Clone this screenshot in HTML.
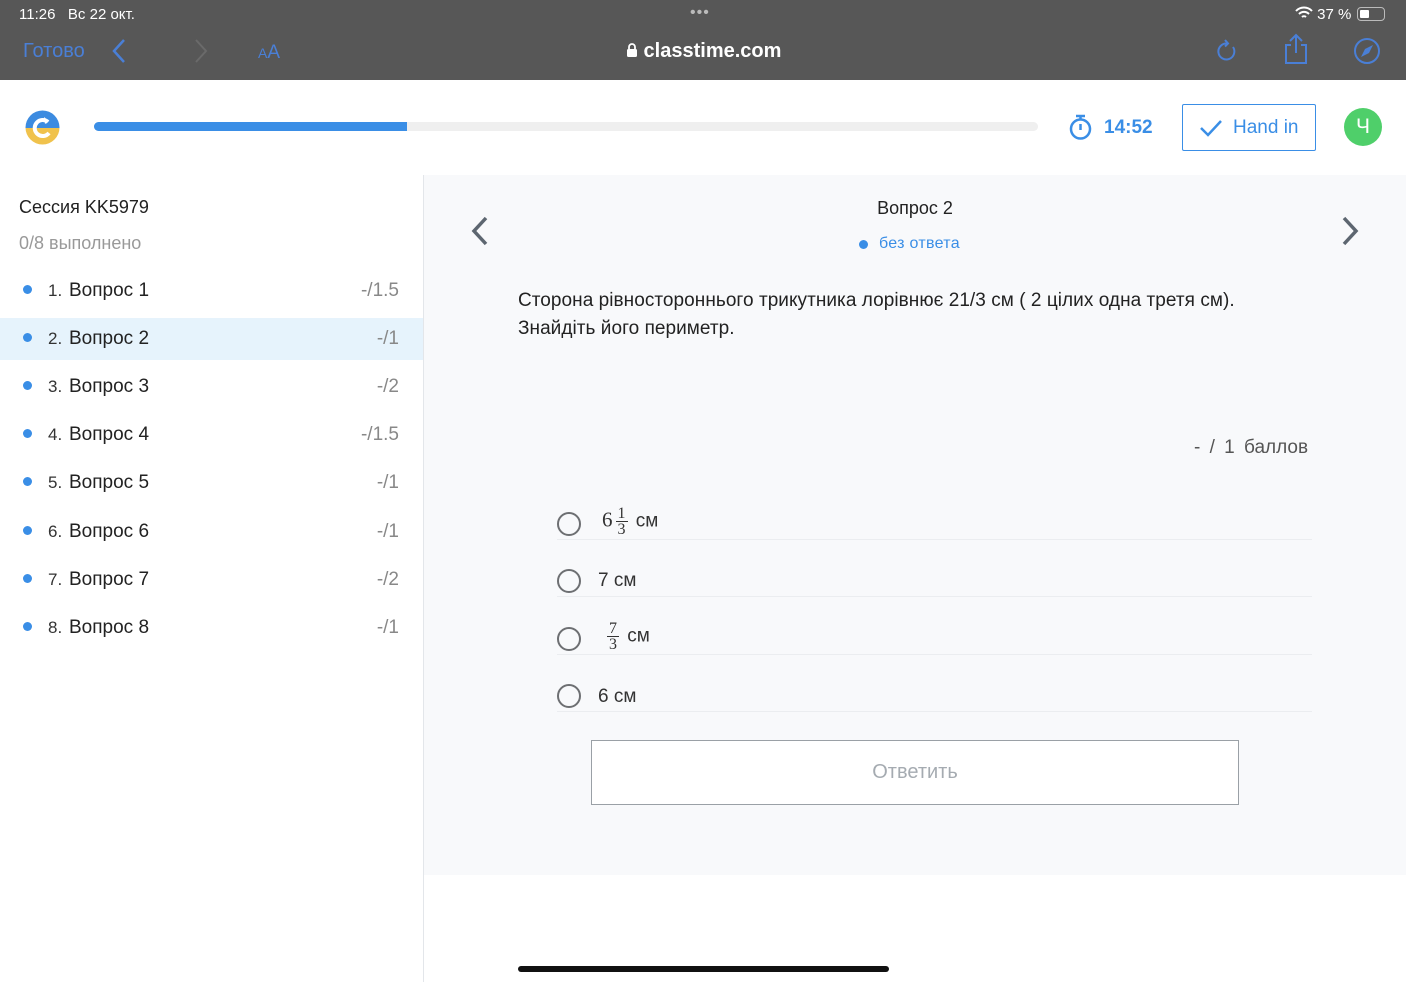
<!DOCTYPE html>
<html><head><meta charset="utf-8"><style>
*{margin:0;padding:0;box-sizing:border-box}
body{width:1406px;height:982px;overflow:hidden;background:#fff;font-family:"Liberation Sans",Arial,sans-serif;position:relative;color:#222}
.abs{position:absolute}
.top{left:0;top:0;width:1406px;height:80px;background:#575757;color:#fff}
.blue{color:#4a7fd6}
.main{left:424px;top:175px;width:982px;height:700px;background:#f8f9fb}
.vline{left:423px;top:175px;width:1px;height:807px;background:#e3e6ea}
.item{left:0;width:423px;height:42px;font-size:19px}
.item .dot{position:absolute;left:23px;top:15px;width:9px;height:9px;border-radius:50%;background:#3a8ee6}
.item .n{position:absolute;left:48px;top:11px;font-size:17px;color:#333}
.item .t{position:absolute;left:69px;top:10px;color:#222}
.item .s{position:absolute;right:24px;top:10px;color:#888}
.opt{left:557px;width:755px;height:40px;border-bottom:1px solid #ebedf0}
.radio{position:absolute;left:0;top:6px;width:24px;height:24px;border:2.5px solid #6d6f72;border-radius:50%}
.ot{position:absolute;left:41px;top:6px;font-size:19px;color:#333}
.frac{display:inline-block;vertical-align:middle;text-align:center;font-family:"Liberation Serif",serif;font-size:16px;line-height:15px;margin:0 3px}
.frac span{display:block}
.frac .num{border-bottom:1px solid #333;padding:0 2px}
</style></head><body>
<div class="abs top">
 <div class="abs" style="left:19px;top:6px;font-size:15px">11:26&nbsp;&nbsp;&nbsp;Вс 22 окт.</div>
 <div class="abs" style="left:690px;top:4px;font-size:16px;letter-spacing:1px;color:#bbb">•••</div>
 <div class="abs" style="left:1295px;top:6px;font-size:15px">
  <svg width="18" height="14" viewBox="0 0 18 14" style="vertical-align:-1px"><path d="M1 5a11 11 0 0 1 16 0M4 8a7 7 0 0 1 10 0M7 11a3 3 0 0 1 4 0" stroke="#fff" stroke-width="2" fill="none"/></svg> 37 %</div>
 <div class="abs" style="left:1357px;top:7px;width:28px;height:14px;border:1.5px solid #bbb;border-radius:4px"><div style="margin:1.5px;width:9px;height:8px;background:#fff;border-radius:1px"></div></div>
 <div class="abs blue" style="left:23px;top:40px;font-size:20px">Готово</div>
 <svg class="abs" style="left:110px;top:38px" width="18" height="26"><path d="M14 2 4 13l10 11" stroke="#4a7fd6" stroke-width="2.5" fill="none"/></svg>
 <svg class="abs" style="left:192px;top:38px" width="18" height="26"><path d="M4 2l10 11L4 24" stroke="#6a6a6a" stroke-width="2" fill="none"/></svg>
 <div class="abs blue" style="left:258px;top:42px;font-size:19px"><span style="font-size:14px">A</span>A</div>
 <div class="abs" style="left:626px;top:40px;font-size:20px;font-weight:bold">
  <svg width="12" height="16" viewBox="0 0 12 16" style="vertical-align:-1px"><rect x="1" y="7" width="10" height="8" rx="1.5" fill="#fff"/><path d="M3 7V5a3 3 0 0 1 6 0v2" stroke="#fff" stroke-width="1.8" fill="none"/></svg> classtime.com</div>
 <svg class="abs" style="left:1214px;top:38px" width="26" height="26" viewBox="0 0 26 26"><path d="M19 9a8 8 0 1 1-6-3.5" stroke="#4a7fd6" stroke-width="2" fill="none"/><path d="M11 2l3 3.5-3 3" stroke="#4a7fd6" stroke-width="2" fill="none"/></svg>
 <svg class="abs" style="left:1282px;top:33px" width="28" height="32" viewBox="0 0 28 32"><path d="M9 12H4v18h20V12h-5M14 20V2M8 8l6-6 6 6" stroke="#4a7fd6" stroke-width="2" fill="none"/></svg>
 <svg class="abs" style="left:1352px;top:36px" width="30" height="30" viewBox="0 0 30 30"><circle cx="15" cy="15" r="12" stroke="#4a7fd6" stroke-width="2" fill="none"/><path d="M21 9l-8 4-4 8 8-4z" fill="#4a7fd6"/></svg>
</div>

<svg class="abs" style="left:25px;top:110px" width="35" height="35" viewBox="0 0 35 35"><defs><clipPath id="c"><circle cx="17.5" cy="17.5" r="17"/></clipPath></defs><g clip-path="url(#c)"><rect width="35" height="18" fill="#3c8be0"/><rect y="18" width="35" height="17" fill="#f0c24c"/></g><path d="M23 12a8 8 0 1 0 1 11" stroke="#fff" stroke-width="4" fill="none"/><path d="M19 7l5 4-4 3" fill="#fff"/></svg>
<div class="abs" style="left:94px;top:122px;width:944px;height:9px;background:#efefef;border-radius:5px"></div>
<div class="abs" style="left:94px;top:122px;width:313px;height:9px;background:#3a8ee6;border-radius:5px 0 0 5px"></div>
<svg class="abs" style="left:1068px;top:113px" width="25" height="28" viewBox="0 0 25 28"><circle cx="12.5" cy="16" r="9.5" stroke="#3a8ee6" stroke-width="2.5" fill="none"/><path d="M8 3h9M12.5 3v3M12.5 11v6" stroke="#3a8ee6" stroke-width="2.5" fill="none"/></svg>
<div class="abs" style="left:1104px;top:117px;font-size:19px;font-weight:bold;color:#3a8ee6">14:52</div>
<div class="abs" style="left:1182px;top:104px;width:134px;height:47px;border:1.5px solid #3a8ee6;border-radius:2px;color:#3a8ee6;font-size:19px">
 <svg class="abs" style="left:16px;top:13px" width="24" height="20"><path d="M2 10l7 7L22 3" stroke="#3a8ee6" stroke-width="2.5" fill="none"/></svg>
 <span class="abs" style="left:50px;top:12px">Hand in</span></div>
<div class="abs" style="left:1344px;top:108px;width:38px;height:38px;border-radius:50%;background:#4fcf6a;color:#fff;font-size:21px;text-align:center;line-height:38px">Ч</div>

<div class="abs vline"></div>
<div class="abs" style="left:19px;top:197px;font-size:18px;color:#222">Сессия KK5979</div>
<div class="abs" style="left:19px;top:233px;font-size:18px;color:#999">0/8 выполнено</div>
<div class="abs item" style="top:270px"><i class="dot"></i><span class="n">1.</span><span class="t">Вопрос 1</span><span class="s">-/1.5</span></div>
<div class="abs item" style="top:318px;background:#e6f3fc"><i class="dot"></i><span class="n">2.</span><span class="t">Вопрос 2</span><span class="s">-/1</span></div>
<div class="abs item" style="top:366px"><i class="dot"></i><span class="n">3.</span><span class="t">Вопрос 3</span><span class="s">-/2</span></div>
<div class="abs item" style="top:414px"><i class="dot"></i><span class="n">4.</span><span class="t">Вопрос 4</span><span class="s">-/1.5</span></div>
<div class="abs item" style="top:462px"><i class="dot"></i><span class="n">5.</span><span class="t">Вопрос 5</span><span class="s">-/1</span></div>
<div class="abs item" style="top:511px"><i class="dot"></i><span class="n">6.</span><span class="t">Вопрос 6</span><span class="s">-/1</span></div>
<div class="abs item" style="top:559px"><i class="dot"></i><span class="n">7.</span><span class="t">Вопрос 7</span><span class="s">-/2</span></div>
<div class="abs item" style="top:607px"><i class="dot"></i><span class="n">8.</span><span class="t">Вопрос 8</span><span class="s">-/1</span></div>

<div class="abs main"></div>
<svg class="abs" style="left:468px;top:215px" width="24" height="32"><path d="M18 3 6 16l12 13" stroke="#5d6670" stroke-width="3.5" fill="none"/></svg>
<svg class="abs" style="left:1338px;top:215px" width="24" height="32"><path d="M6 3l12 13L6 29" stroke="#5d6670" stroke-width="3.5" fill="none"/></svg>
<div class="abs" style="left:0;width:1830px;text-align:center;top:198px;font-size:18px;color:#222">Вопрос 2</div>
<div class="abs" style="left:859px;top:240px;width:9px;height:9px;border-radius:50%;background:#3a8ee6"></div>
<div class="abs" style="left:879px;top:235px;font-size:16px;color:#3a8ee6;letter-spacing:0.3px">без ответа</div>
<div class="abs" style="left:518px;top:287px;font-size:19px;line-height:28px;color:#222;letter-spacing:0.05px">Сторона рівностороннього трикутника лорівнює 21/3 см ( 2 цілих одна третя см).<br>Знайдіть його периметр.</div>
<div class="abs" style="left:1194px;top:437px;font-size:19px;color:#555;word-spacing:4px">- / 1 баллов</div>

<div class="abs opt" style="top:500px"><i class="radio" style="top:12px"></i><div class="ot" style="top:6px;left:45px"><span style="font-family:'Liberation Serif',serif;font-size:21px">6</span><span class="frac"><span class="num">1</span><span>3</span></span> см</div></div>
<div class="abs opt" style="top:557px"><i class="radio" style="top:12px"></i><div class="ot" style="top:13px">7 см</div></div>
<div class="abs opt" style="top:615px"><i class="radio" style="top:12px"></i><div class="ot" style="top:6px;left:47px"><span class="frac"><span class="num">7</span><span>3</span></span> см</div></div>
<div class="abs opt" style="top:672px"><i class="radio" style="top:12px"></i><div class="ot" style="top:14px">6 см</div></div>

<div class="abs" style="left:591px;top:740px;width:648px;height:65px;border:1.5px solid #9aa0a6;background:#fff;text-align:center;line-height:62px;font-size:20px;color:#a5abb1">Ответить</div>

<div class="abs" style="left:518px;top:966px;width:371px;height:6px;border-radius:3px;background:#111"></div>
</body></html>
